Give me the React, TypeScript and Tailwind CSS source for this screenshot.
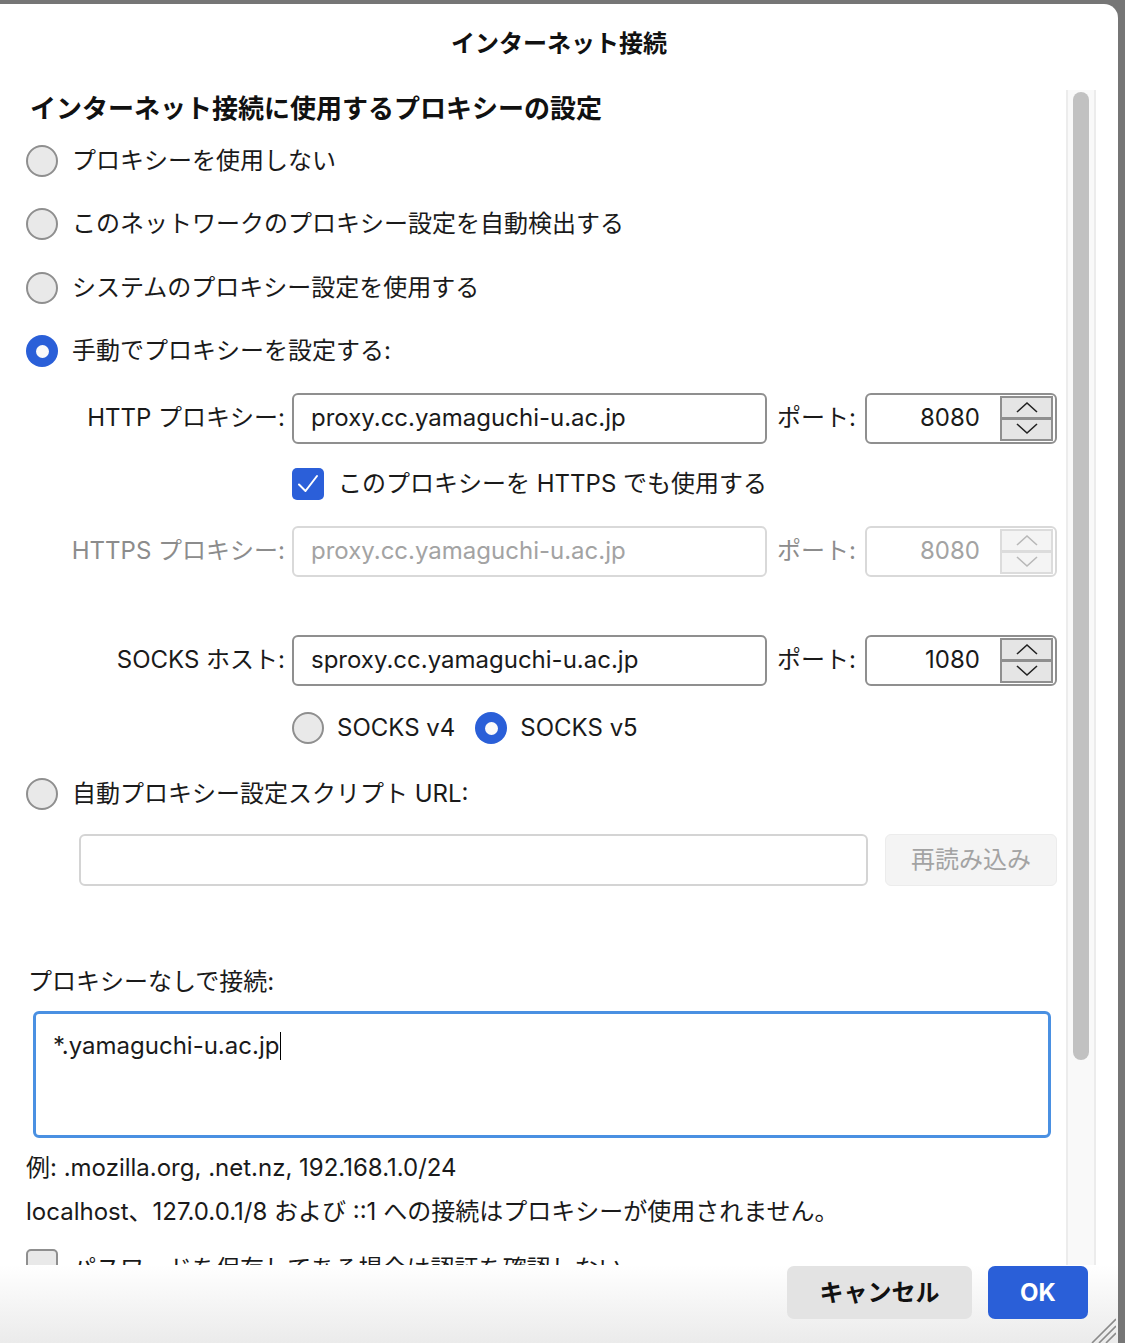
import React from 'react';

const font = { fontFamily: 'Inter, "Noto Sans CJK JP", sans-serif' };

function Radio({ checked }: { checked?: boolean }) {
  if (checked) {
    return (
      <div className="w-[32px] h-[32px] rounded-full bg-[#2a5fd8] flex items-center justify-center shrink-0">
        <div className="w-[13px] h-[13px] rounded-full bg-[#fafafa]" />
      </div>
    );
  }
  return <div className="w-[32px] h-[32px] rounded-full border-2 border-[#8f8f8f] bg-[#e9e9e9] shrink-0" />;
}

function Checkbox({ checked }: { checked?: boolean }) {
  if (checked) {
    return (
      <div className="w-[32px] h-[32px] rounded-[5px] bg-[#2b5fd9] flex items-center justify-center shrink-0">
        <svg width="24" height="24" viewBox="0 0 24 24" fill="none">
          <path d="M3 12.5 L9.5 19 L21 4" stroke="white" strokeWidth="2" strokeLinecap="round" strokeLinejoin="round" />
        </svg>
      </div>
    );
  }
  return <div className="w-[32px] h-[32px] rounded-[5px] border-2 border-[#8f8f8f] bg-[#e9e9e9] shrink-0" />;
}

function Chevron({ up, color }: { up?: boolean; color: string }) {
  return (
    <svg width="24" height="12" viewBox="0 0 24 12" fill="none">
      <path d={up ? 'M2 11 L12 2 L22 11' : 'M2 1 L12 10 L22 1'} stroke={color} strokeWidth="1.6" />
    </svg>
  );
}

function PortInput({ value, disabled }: { value: string; disabled?: boolean }) {
  const border = disabled ? 'border-[#d9d9d9]' : 'border-[#8f8f8f]';
  return (
    <div className={`w-[192px] h-[51px] rounded-[6px] border-2 ${border} bg-white flex items-center pr-[2px]`}>
      <div className={`flex-1 text-right pr-[20px] ${disabled ? 'text-[#a3a3a3]' : 'text-[#1a1a1a]'}`}>{value}</div>
      <div
        className={`w-[53px] h-[45px] flex flex-col border-2 ${
          disabled ? 'border-[#dcdcdc] bg-[#f4f4f4]' : 'border-[#8f8f8f] bg-[#e5e5e5]'
        }`}
      >
        <div className="flex-1 flex items-center justify-center">
          <Chevron up color={disabled ? '#b8b8b8' : '#222'} />
        </div>
        <div className={`h-[3px] ${disabled ? 'bg-[#dcdcdc]' : 'bg-[#8f8f8f]'}`} />
        <div className="flex-1 flex items-center justify-center">
          <Chevron color={disabled ? '#b8b8b8' : '#222'} />
        </div>
      </div>
    </div>
  );
}

function ProxyRow({ label, value, port, disabled }: { label: string; value: string; port: string; disabled?: boolean }) {
  const textColor = disabled ? 'text-[#8c8c8c]' : 'text-[#1a1a1a]';
  return (
    <div className="flex items-center h-full">
      <div className={`w-[259px] text-right whitespace-nowrap ${textColor}`}>{label}</div>
      <div
        className={`ml-[7px] w-[475px] h-[51px] rounded-[6px] border-2 bg-white flex items-center pl-[17px] ${
          disabled ? 'border-[#d9d9d9] text-[#a3a3a3]' : 'border-[#8f8f8f] text-[#1a1a1a]'
        }`}
      >
        {value}
      </div>
      <div className={`ml-[10px] w-[79px] whitespace-nowrap ${textColor}`}>ポート:</div>
      <div className="ml-[9px]">
        <PortInput value={port} disabled={disabled} />
      </div>
    </div>
  );
}

export default function App() {
  return (
    <div className="w-[1125px] h-[1343px] bg-[#767676] pt-[4px] pr-[7px] overflow-hidden relative" style={font}>
      <div className="h-full bg-white rounded-tr-[14px] flex flex-col text-[24px] text-[#1a1a1a] relative">
        {/* Title */}
        <div className="h-[84px] shrink-0 flex items-center justify-center pb-[4px]">
          <span className="text-[24px] font-bold text-[#111]">インターネット接続</span>
        </div>

        {/* Scroll area */}
        <div className="h-[1177px] shrink-0 flex overflow-hidden">
          <div className="w-[1066px] shrink-0 pl-[26px]">
            <div className="h-[41px] flex items-center pl-[4px]">
              <span className="text-[26px] font-bold text-[#111]">インターネット接続に使用するプロキシーの設定</span>
            </div>

            {[
              'プロキシーを使用しない',
              'このネットワークのプロキシー設定を自動検出する',
              'システムのプロキシー設定を使用する',
            ].map((t) => (
              <div key={t} className="h-[63.5px] flex items-center gap-[14px]">
                <Radio />
                <span>{t}</span>
              </div>
            ))}
            <div className="h-[63.5px] flex items-center gap-[14px]">
              <Radio checked />
              <span>手動でプロキシーを設定する:</span>
            </div>

            <div className="h-[70px]">
              <ProxyRow label="HTTP プロキシー:" value="proxy.cc.yamaguchi-u.ac.jp" port="8080" />
            </div>

            <div className="h-[62px] flex items-center pl-[266px] gap-[14px]">
              <Checkbox checked />
              <span>このプロキシーを HTTPS でも使用する</span>
            </div>

            <div className="h-[72px]">
              <ProxyRow label="HTTPS プロキシー:" value="proxy.cc.yamaguchi-u.ac.jp" port="8080" disabled />
            </div>

            <div className="h-[38px]" />

            <div className="h-[70px]">
              <ProxyRow label="SOCKS ホスト:" value="sproxy.cc.yamaguchi-u.ac.jp" port="1080" />
            </div>

            <div className="h-[66px] flex items-center pl-[266px]">
              <Radio />
              <span className="ml-[13px]">SOCKS v4</span>
              <div className="ml-[20px]">
                <Radio checked />
              </div>
              <span className="ml-[13px]">SOCKS v5</span>
            </div>

            <div className="h-[66px] flex items-center gap-[14px]">
              <Radio />
              <span>自動プロキシー設定スクリプト URL:</span>
            </div>

            <div className="h-[66px] flex items-center pl-[53px]">
              <div className="w-[789px] h-[52px] rounded-[6px] border-2 border-[#d4d4d4] bg-white" />
              <div className="ml-[17px] w-[172px] h-[52px] rounded-[6px] bg-[#f4f4f4] border border-[#ececec] flex items-center justify-center text-[#a3a3a3]">
                再読み込み
              </div>
            </div>

            <div className="h-[69px]" />

            <div className="h-[40px] flex items-center pl-[2px]">
              <span>プロキシーなしで接続:</span>
            </div>

            <div className="mt-[9px] ml-[7px] w-[1018px] h-[127px] rounded-[6px] border-[3px] border-[#4a90e2] pt-[15px] pl-[17px]">
              <div className="flex items-center h-[34px]">
                <span>*.yamaguchi-u.ac.jp</span>
                <div className="w-[1px] h-[28px] bg-black ml-[1px]" />
              </div>
            </div>

            <div className="mt-[10px] h-[40px] flex items-center">
              <span>例: .mozilla.org, .net.nz, 192.168.1.0/24</span>
            </div>
            <div className="mt-[4px] h-[40px] flex items-center">
              <span>localhost、127.0.0.1/8 および ::1 への接続はプロキシーが使用されません。</span>
            </div>

            <div className="mt-[17px] flex items-start gap-[14px]">
              <Checkbox />
              <span className="mt-[2px]">パスワードを保存してある場合は認証を確認しない</span>
            </div>
          </div>

          {/* Scrollbar */}
          <div className="w-[30px] shrink-0 mt-[2px] bg-[#f9f9f9] border-x-2 border-[#ececec] flex justify-center pt-[2px]">
            <div className="w-[16px] h-[968px] rounded-full bg-[#c1c1c1]" />
          </div>
        </div>

        {/* Footer */}
        <div className="flex-1 bg-linear-to-b from-white to-[#ebebeb] flex justify-end items-start pt-[1px] pr-[30px] gap-[16px]">
          <div className="w-[185px] h-[53px] rounded-[7px] bg-[#e3e3e3] flex items-center justify-center font-bold text-[#111]">
            キャンセル
          </div>
          <div className="w-[100px] h-[53px] rounded-[7px] bg-[#2a5fd8] flex items-center justify-center font-bold text-white">
            OK
          </div>
        </div>

        {/* Resize grip */}
        <svg className="absolute right-[2px] bottom-[0px]" width="26" height="26" viewBox="0 0 26 26">
          <path d="M2 26 L26 2 M9 26 L26 9 M16 26 L26 16" stroke="#8a8a8a" strokeWidth="1.6" />
        </svg>
      </div>
    </div>
  );
}
